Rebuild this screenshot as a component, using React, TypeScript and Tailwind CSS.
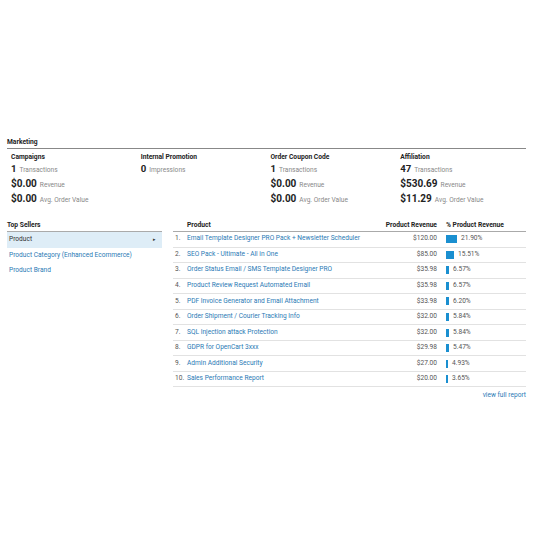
import React from "react";

const stats = [
  { title: "Campaigns", rows: [["1", "Transactions"], ["$0.00", "Revenue"], ["$0.00", "Avg. Order Value"]] },
  { title: "Internal Promotion", rows: [["0", "Impressions"]] },
  { title: "Order Coupon Code", rows: [["1", "Transactions"], ["$0.00", "Revenue"], ["$0.00", "Avg. Order Value"]] },
  { title: "Affiliation", rows: [["47", "Transactions"], ["$530.69", "Revenue"], ["$11.29", "Avg. Order Value"]] },
];

const products = [
  ["Email Template Designer PRO Pack + Newsletter Scheduler", "$120.00", 21.9],
  ["SEO Pack - Ultimate - All in One", "$85.00", 15.51],
  ["Order Status Email / SMS Template Designer PRO", "$35.98", 6.57],
  ["Product Review Request Automated Email", "$35.98", 6.57],
  ["PDF Invoice Generator and Email Attachment", "$33.98", 6.2],
  ["Order Shipment / Courier Tracking Info", "$32.00", 5.84],
  ["SQL Injection attack Protection", "$32.00", 5.84],
  ["GDPR for OpenCart 3xxx", "$29.98", 5.47],
  ["Admin Additional Security", "$27.00", 4.93],
  ["Sales Performance Report", "$20.00", 3.65],
] as const;

export default function App() {
  return (
    <div className="w-[535px] h-[535px] bg-white pt-[138px] pl-[7px] pr-[9px] text-[#222] font-['Roboto',sans-serif]">
      {/* Marketing */}
      <div className="text-[6.7px] font-bold leading-[9px] pb-[1px] border-b border-[#888]">Marketing</div>
      <div className="grid grid-cols-4">
        {stats.map((s) => (
          <div key={s.title} className="px-[4px] pt-[3px]">
            <div className="text-[6.7px] font-bold leading-[10px]">{s.title}</div>
            {s.rows.map(([v, l], i) => (
              <div key={l} className={`flex items-center ${i === 0 ? "h-[14px]" : "h-[15.5px]"}`}>
                <span className={`leading-none font-bold ${i === 0 ? "text-[9.6px]" : "text-[10px]"}`}>
                  {v}
                  <span className="text-[6.6px] font-normal text-[#888] ml-[3px]">{l}</span>
                </span>
              </div>
            ))}
          </div>
        ))}
      </div>

      {/* Top sellers */}
      <div className="flex gap-[11px] mt-[14px]">
        <div className="w-[155px] shrink-0">
          <div className="text-[6.7px] font-bold leading-[9px] pb-[1px] border-b border-[#aaa]">Top Sellers</div>
          <div className="h-[16px] bg-[#deedf7] flex items-center justify-between px-[2px] text-[6.6px] text-[#333]">
            <span>Product</span>
            <span className="text-[5px] mr-[4px]">▸</span>
          </div>
          <div className="h-[15.5px] flex items-center px-[2px] text-[6.6px] text-[#2a7ab5] whitespace-nowrap">Product Category (Enhanced Ecommerce)</div>
          <div className="h-[15.5px] flex items-center px-[2px] text-[6.6px] text-[#2a7ab5]">Product Brand</div>
        </div>

        <div className="flex-1 min-w-0">
          <div className="flex text-[6.7px] font-bold leading-[9px] pb-[1px] border-b border-[#aaa]">
            <div className="w-[14px]" />
            <div className="flex-1">Product</div>
            <div className="w-[70px] text-right">Product Revenue</div>
            <div className="w-[89px] pl-[9px]">% Product Revenue</div>
          </div>
          {products.map(([name, rev, pct], i) => (
            <div key={name} className="flex items-center h-[15.56px] border-b border-[#e2e2e2] text-[6.6px]">
              <div className="w-[14px] pl-[2px] text-[#555]">{i + 1}.</div>
              <div className="flex-1 min-w-0 text-[#2a7ab5] whitespace-nowrap">{name}</div>
              <div className="w-[70px] text-right text-[#555]">{rev}</div>
              <div className="w-[89px] pl-[9px] flex items-center gap-[4px] text-[#555]">
                <span className="h-[8px] bg-[#1a8fd0]" style={{ width: Math.max(2, Math.round(pct / 2)) }} />
                <span>{pct.toFixed(2)}%</span>
              </div>
            </div>
          ))}
          <div className="text-right text-[6.6px] text-[#2a7ab5] mt-[4px]">view full report</div>
        </div>
      </div>
    </div>
  );
}
